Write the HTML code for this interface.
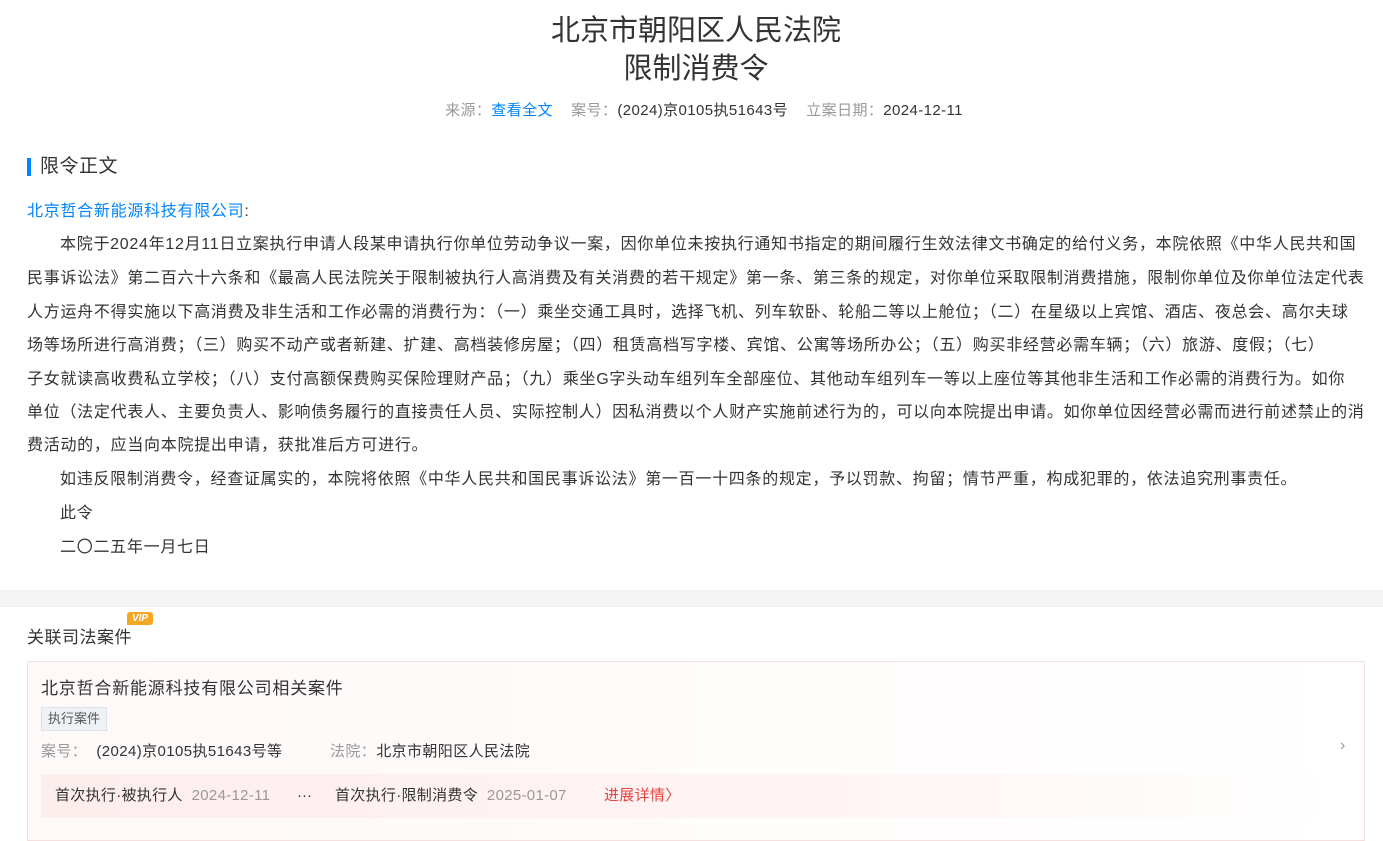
<!DOCTYPE html>
<html><head><meta charset="utf-8"><style>
*{margin:0;padding:0;box-sizing:border-box}
body{width:1383px;height:825px;overflow:hidden;background:#fff;font-family:"Liberation Sans","Noto Sans CJK SC",sans-serif;color:#333;position:relative}
.a{position:absolute;white-space:nowrap}
.t{font-size:29px;color:#333;left:0;width:1392px;text-align:center}
.meta{top:99px;left:0;width:1408px;text-align:center;font-size:15px;color:#999;letter-spacing:0.4px}
.meta b{font-weight:normal;color:#333}
.meta i{font-style:normal;color:#0084ff}
.ln{position:absolute;left:27px;font-size:16px;white-space:nowrap;line-height:20px;letter-spacing:0.72px}
</style></head><body>
<div class="a t" style="top:12px;line-height:38px">北京市朝阳区人民法院</div>
<div class="a t" style="top:50px;line-height:38px">限制消费令</div>
<div class="a meta">来源：<i>查看全文</i>&nbsp;&nbsp;&nbsp; 案号：<b>(2024)京0105执51643号</b>&nbsp;&nbsp;&nbsp; 立案日期：<b>2024-12-11</b></div>
<div class="a" style="left:27px;top:158px;width:4px;height:18px;background:#0084ff"></div>
<div class="a" style="left:40px;top:155px;font-size:19px;line-height:24px;color:#333;letter-spacing:0.5px">限令正文</div>
<div class="ln" style="top:202px;color:#0084ff">北京哲合新能源科技有限公司<span style="color:#333">:</span></div>
<div class="ln" style="top:235px;left:60px">本院于2024年12月11日立案执行申请人段某申请执行你单位劳动争议一案，因你单位未按执行通知书指定的期间履行生效法律文书确定的给付义务，本院依照《中华人民共和国</div>
<div class="ln" style="top:269px">民事诉讼法》第二百六十六条和《最高人民法院关于限制被执行人高消费及有关消费的若干规定》第一条、第三条的规定，对你单位采取限制消费措施，限制你单位及你单位法定代表</div>
<div class="ln" style="top:303px">人方运舟不得实施以下高消费及非生活和工作必需的消费行为：（一）乘坐交通工具时，选择飞机、列车软卧、轮船二等以上舱位；（二）在星级以上宾馆、酒店、夜总会、高尔夫球</div>
<div class="ln" style="top:336px">场等场所进行高消费；（三）购买不动产或者新建、扩建、高档装修房屋；（四）租赁高档写字楼、宾馆、公寓等场所办公；（五）购买非经营必需车辆；（六）旅游、度假；（七）</div>
<div class="ln" style="top:370px">子女就读高收费私立学校；（八）支付高额保费购买保险理财产品；（九）乘坐G字头动车组列车全部座位、其他动车组列车一等以上座位等其他非生活和工作必需的消费行为。如你</div>
<div class="ln" style="top:403px">单位（法定代表人、主要负责人、影响债务履行的直接责任人员、实际控制人）因私消费以个人财产实施前述行为的，可以向本院提出申请。如你单位因经营必需而进行前述禁止的消</div>
<div class="ln" style="top:436px">费活动的，应当向本院提出申请，获批准后方可进行。</div>
<div class="ln" style="top:470px;left:60px">如违反限制消费令，经查证属实的，本院将依照《中华人民共和国民事诉讼法》第一百一十四条的规定，予以罚款、拘留；情节严重，构成犯罪的，依法追究刑事责任。</div>
<div class="ln" style="top:504px;left:60px">此令</div>
<div class="ln" style="top:538px;left:60px">二〇二五年一月七日</div>
<div class="a" style="left:0;top:590px;width:1383px;height:17px;background:#f5f5f6;border-top:1px solid #eee;border-bottom:1px solid #eee"></div>
<div class="a" style="left:27px;top:627px;font-size:17px;line-height:22px;letter-spacing:0.5px">关联司法案件</div>
<div class="a" style="left:127px;top:612px;width:26px;height:13px;background:#f5a623;border-radius:3px 3px 3px 0;color:#fff;font-size:10px;font-weight:bold;font-style:italic;text-align:center;line-height:13px">VIP</div>
<div class="a" style="left:27px;top:661px;width:1338px;height:180px;border:1px solid #f5dede;background:linear-gradient(90deg,#fff8f8,#fff)"></div>
<div class="a" style="left:41px;top:678px;font-size:17px;line-height:22px;letter-spacing:0.8px">北京哲合新能源科技有限公司相关案件</div>
<div class="a" style="left:41px;top:707px;height:24px;padding:0 6px;background:#eef2f7;border:1px solid #dde3ea;font-size:13px;line-height:22px;color:#555">执行案件</div>
<div class="a" style="left:41px;top:742px;font-size:15px;line-height:20px;color:#999;letter-spacing:0.4px">案号：&nbsp;&nbsp;<span style="color:#333">(2024)京0105执51643号等</span></div>
<div class="a" style="left:330px;top:742px;font-size:15px;line-height:20px;color:#999;letter-spacing:0.4px">法院：<span style="color:#333">北京市朝阳区人民法院</span></div>
<div class="a" style="left:1340px;top:737px;font-size:16px;color:#999">&#x203A;</div>
<div class="a" style="left:41px;top:774px;width:1280px;height:44px;background:linear-gradient(90deg,#fdeeee,#fff4f4 60%,rgba(255,255,255,0))"></div>
<div class="a" style="left:55px;top:786px;font-size:15px;line-height:20px;color:#333;letter-spacing:0.3px">首次执行·被执行人 <span style="color:#999">&nbsp;2024-12-11</span></div>
<div class="a" style="left:297px;top:786px;font-size:15px;line-height:20px;color:#333">···</div>
<div class="a" style="left:335px;top:786px;font-size:15px;line-height:20px;color:#333;letter-spacing:0.3px">首次执行·限制消费令 <span style="color:#999">&nbsp;2025-01-07</span></div>
<div class="a" style="left:604px;top:786px;font-size:15px;line-height:20px;color:#e5443f;letter-spacing:0.3px">进展详情&#x232A;</div>
</body></html>
